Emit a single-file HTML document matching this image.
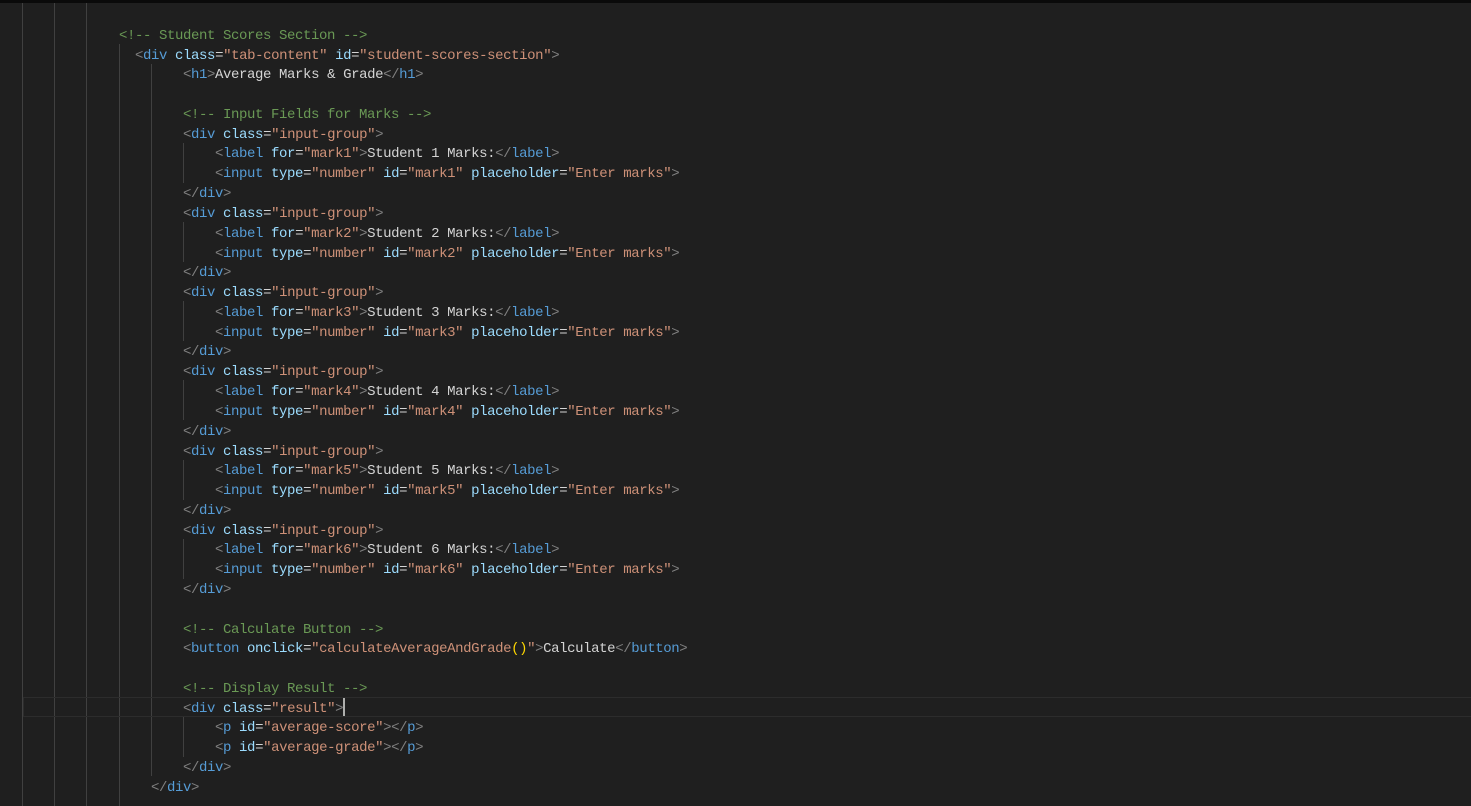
<!DOCTYPE html>
<html><head><meta charset="utf-8">
<style>
html,body{margin:0;padding:0;}
body{width:1471px;height:806px;background:#1f1f1f;position:relative;overflow:hidden;font-family:"Liberation Mono",monospace;font-size:14px;letter-spacing:-0.4px;}
.top{position:absolute;left:0;top:0;width:1471px;height:3px;background:#0a0a0a;}
.g{position:absolute;width:1px;background:#404040;}
.hl{position:absolute;left:23px;right:0;top:697px;height:18px;border:1px solid #2c2c2c;border-right:none;}
.l{position:absolute;height:20px;line-height:20px;white-space:pre;color:#d4d4d4;margin-top:2px;}
.c{color:#6a9955}.t{color:#569cd6}.p{color:#808080}.a{color:#9cdcfe}.s{color:#ce9178}.y{color:#ffd700}
.cur{position:absolute;left:343px;top:698px;width:2px;height:18px;background:#aeafad;}
</style></head><body>
<div class="top"></div>
<div class="g" style="left:22px;top:3px;height:803px"></div>
<div class="g" style="left:54px;top:3px;height:803px"></div>
<div class="g" style="left:86px;top:3px;height:803px"></div>
<div class="g" style="left:119px;top:44px;height:762px"></div>
<div class="g" style="left:151px;top:64px;height:712px"></div>
<div class="g" style="left:183px;top:143px;height:40px"></div>
<div class="g" style="left:183px;top:222px;height:40px"></div>
<div class="g" style="left:183px;top:301px;height:40px"></div>
<div class="g" style="left:183px;top:380px;height:40px"></div>
<div class="g" style="left:183px;top:460px;height:40px"></div>
<div class="g" style="left:183px;top:539px;height:40px"></div>
<div class="g" style="left:183px;top:717px;height:40px"></div>
<div class="hl"></div>

<div class="l c" style="left:119px;top:24px">&lt;!-- Student Scores Section --&gt;</div>
<div class="l" style="left:135px;top:44px"><span class="p">&lt;</span><span class="t">div</span> <span class="a">class</span>=<span class="s">"tab-content"</span> <span class="a">id</span>=<span class="s">"student-scores-section"</span><span class="p">&gt;</span></div>
<div class="l" style="left:183px;top:63px"><span class="p">&lt;</span><span class="t">h1</span><span class="p">&gt;</span>Average Marks &amp; Grade<span class="p">&lt;/</span><span class="t">h1</span><span class="p">&gt;</span></div>
<div class="l c" style="left:183px;top:103px">&lt;!-- Input Fields for Marks --&gt;</div>

<div class="l" style="left:183px;top:123px"><span class="p">&lt;</span><span class="t">div</span> <span class="a">class</span>=<span class="s">"input-group"</span><span class="p">&gt;</span></div>
<div class="l" style="left:215px;top:142px"><span class="p">&lt;</span><span class="t">label</span> <span class="a">for</span>=<span class="s">"mark1"</span><span class="p">&gt;</span>Student 1 Marks:<span class="p">&lt;/</span><span class="t">label</span><span class="p">&gt;</span></div>
<div class="l" style="left:215px;top:162px"><span class="p">&lt;</span><span class="t">input</span> <span class="a">type</span>=<span class="s">"number"</span> <span class="a">id</span>=<span class="s">"mark1"</span> <span class="a">placeholder</span>=<span class="s">"Enter marks"</span><span class="p">&gt;</span></div>
<div class="l" style="left:183px;top:182px"><span class="p">&lt;/</span><span class="t">div</span><span class="p">&gt;</span></div>

<div class="l" style="left:183px;top:202px"><span class="p">&lt;</span><span class="t">div</span> <span class="a">class</span>=<span class="s">"input-group"</span><span class="p">&gt;</span></div>
<div class="l" style="left:215px;top:222px"><span class="p">&lt;</span><span class="t">label</span> <span class="a">for</span>=<span class="s">"mark2"</span><span class="p">&gt;</span>Student 2 Marks:<span class="p">&lt;/</span><span class="t">label</span><span class="p">&gt;</span></div>
<div class="l" style="left:215px;top:242px"><span class="p">&lt;</span><span class="t">input</span> <span class="a">type</span>=<span class="s">"number"</span> <span class="a">id</span>=<span class="s">"mark2"</span> <span class="a">placeholder</span>=<span class="s">"Enter marks"</span><span class="p">&gt;</span></div>
<div class="l" style="left:183px;top:261px"><span class="p">&lt;/</span><span class="t">div</span><span class="p">&gt;</span></div>

<div class="l" style="left:183px;top:281px"><span class="p">&lt;</span><span class="t">div</span> <span class="a">class</span>=<span class="s">"input-group"</span><span class="p">&gt;</span></div>
<div class="l" style="left:215px;top:301px"><span class="p">&lt;</span><span class="t">label</span> <span class="a">for</span>=<span class="s">"mark3"</span><span class="p">&gt;</span>Student 3 Marks:<span class="p">&lt;/</span><span class="t">label</span><span class="p">&gt;</span></div>
<div class="l" style="left:215px;top:321px"><span class="p">&lt;</span><span class="t">input</span> <span class="a">type</span>=<span class="s">"number"</span> <span class="a">id</span>=<span class="s">"mark3"</span> <span class="a">placeholder</span>=<span class="s">"Enter marks"</span><span class="p">&gt;</span></div>
<div class="l" style="left:183px;top:340px"><span class="p">&lt;/</span><span class="t">div</span><span class="p">&gt;</span></div>

<div class="l" style="left:183px;top:360px"><span class="p">&lt;</span><span class="t">div</span> <span class="a">class</span>=<span class="s">"input-group"</span><span class="p">&gt;</span></div>
<div class="l" style="left:215px;top:380px"><span class="p">&lt;</span><span class="t">label</span> <span class="a">for</span>=<span class="s">"mark4"</span><span class="p">&gt;</span>Student 4 Marks:<span class="p">&lt;/</span><span class="t">label</span><span class="p">&gt;</span></div>
<div class="l" style="left:215px;top:400px"><span class="p">&lt;</span><span class="t">input</span> <span class="a">type</span>=<span class="s">"number"</span> <span class="a">id</span>=<span class="s">"mark4"</span> <span class="a">placeholder</span>=<span class="s">"Enter marks"</span><span class="p">&gt;</span></div>
<div class="l" style="left:183px;top:420px"><span class="p">&lt;/</span><span class="t">div</span><span class="p">&gt;</span></div>

<div class="l" style="left:183px;top:440px"><span class="p">&lt;</span><span class="t">div</span> <span class="a">class</span>=<span class="s">"input-group"</span><span class="p">&gt;</span></div>
<div class="l" style="left:215px;top:459px"><span class="p">&lt;</span><span class="t">label</span> <span class="a">for</span>=<span class="s">"mark5"</span><span class="p">&gt;</span>Student 5 Marks:<span class="p">&lt;/</span><span class="t">label</span><span class="p">&gt;</span></div>
<div class="l" style="left:215px;top:479px"><span class="p">&lt;</span><span class="t">input</span> <span class="a">type</span>=<span class="s">"number"</span> <span class="a">id</span>=<span class="s">"mark5"</span> <span class="a">placeholder</span>=<span class="s">"Enter marks"</span><span class="p">&gt;</span></div>
<div class="l" style="left:183px;top:499px"><span class="p">&lt;/</span><span class="t">div</span><span class="p">&gt;</span></div>

<div class="l" style="left:183px;top:519px"><span class="p">&lt;</span><span class="t">div</span> <span class="a">class</span>=<span class="s">"input-group"</span><span class="p">&gt;</span></div>
<div class="l" style="left:215px;top:538px"><span class="p">&lt;</span><span class="t">label</span> <span class="a">for</span>=<span class="s">"mark6"</span><span class="p">&gt;</span>Student 6 Marks:<span class="p">&lt;/</span><span class="t">label</span><span class="p">&gt;</span></div>
<div class="l" style="left:215px;top:558px"><span class="p">&lt;</span><span class="t">input</span> <span class="a">type</span>=<span class="s">"number"</span> <span class="a">id</span>=<span class="s">"mark6"</span> <span class="a">placeholder</span>=<span class="s">"Enter marks"</span><span class="p">&gt;</span></div>
<div class="l" style="left:183px;top:578px"><span class="p">&lt;/</span><span class="t">div</span><span class="p">&gt;</span></div>

<div class="l c" style="left:183px;top:618px">&lt;!-- Calculate Button --&gt;</div>
<div class="l" style="left:183px;top:637px"><span class="p">&lt;</span><span class="t">button</span> <span class="a">onclick</span>=<span class="s">"calculateAverageAndGrade<span class="y">()</span>"</span><span class="p">&gt;</span>Calculate<span class="p">&lt;/</span><span class="t">button</span><span class="p">&gt;</span></div>
<div class="l c" style="left:183px;top:677px">&lt;!-- Display Result --&gt;</div>
<div class="l" style="left:183px;top:697px"><span class="p">&lt;</span><span class="t">div</span> <span class="a">class</span>=<span class="s">"result"</span><span class="p">&gt;</span></div>
<div class="cur"></div>
<div class="l" style="left:215px;top:716px"><span class="p">&lt;</span><span class="t">p</span> <span class="a">id</span>=<span class="s">"average-score"</span><span class="p">&gt;&lt;/</span><span class="t">p</span><span class="p">&gt;</span></div>
<div class="l" style="left:215px;top:736px"><span class="p">&lt;</span><span class="t">p</span> <span class="a">id</span>=<span class="s">"average-grade"</span><span class="p">&gt;&lt;/</span><span class="t">p</span><span class="p">&gt;</span></div>
<div class="l" style="left:183px;top:756px"><span class="p">&lt;/</span><span class="t">div</span><span class="p">&gt;</span></div>
<div class="l" style="left:151px;top:776px"><span class="p">&lt;/</span><span class="t">div</span><span class="p">&gt;</span></div>
</body></html>
